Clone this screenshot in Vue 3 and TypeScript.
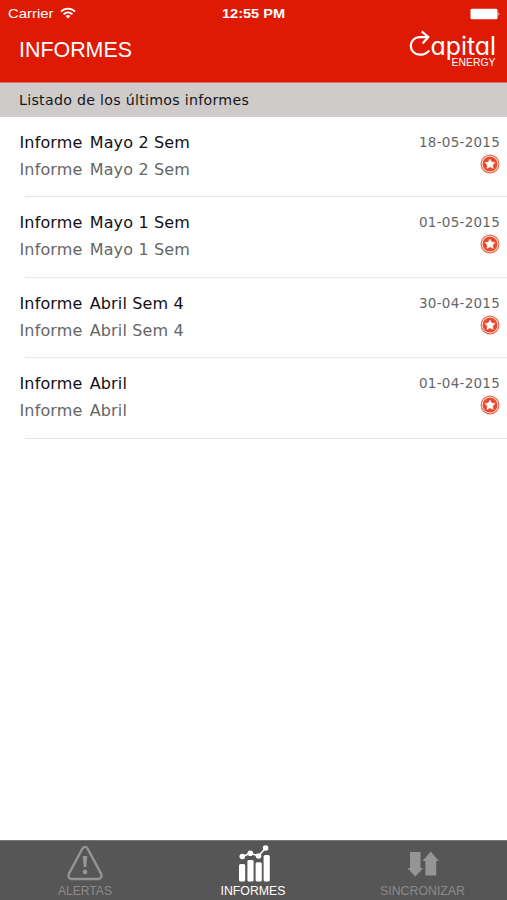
<script setup lang="ts">
interface Report {
  kind: string
  name: string
  date: string
}

const reports: Report[] = [
  { kind: 'Informe', name: 'Mayo 2 Sem', date: '18-05-2015' },
  { kind: 'Informe', name: 'Mayo 1 Sem', date: '01-05-2015' },
  { kind: 'Informe', name: 'Abril Sem 4', date: '30-04-2015' },
  { kind: 'Informe', name: 'Abril', date: '01-04-2015' },
]
</script>

<template>
  <div class="screen">
    <header class="header">
      <div class="status">
        <div class="carrier">
          <svg width="46" height="20" class="label">
            <text x="0" y="14" textLength="45.5" lengthAdjust="spacingAndGlyphs">Carrier</text>
          </svg>
          <svg width="16" height="12" viewBox="0 0 16 12" fill="none" stroke="#fff" stroke-width="1.8">
            <path d="M1 4.6C5 .6 11 .6 15 4.6M3.6 7.3C6.2 4.8 9.8 4.8 12.4 7.3" />
            <path d="M5.6 9.1Q8 7 10.400 9.100L8 11.600Z" fill="#fff" stroke="none" />
          </svg>
        </div>
        <svg width="66" height="20" class="label clock">
          <text x="0" y="14" textLength="63" lengthAdjust="spacingAndGlyphs">12:55 PM</text>
        </svg>
        <svg class="battery" width="31" height="12" viewBox="0 0 31 12" fill="#fff">
          <rect x=".5" y=".7" width="27" height="10.600" rx="1.500" />
          <path d="M28.500 4Q30.200 6 28.500 8Z" />
        </svg>
      </div>
      <div class="titlebar">
        <svg class="heading" width="122" height="34">
          <text x="0" y="23" textLength="113" lengthAdjust="spacingAndGlyphs">INFORMES</text>
        </svg>
        <svg class="logo" width="90" height="42" viewBox="0 0 90 42">
          <path
            d="M21.300 22.500Q17.500 26.600 13.300 26.600H11.500A8.700 8.700 0 0 1 11.500 9.100H19.500M13.700 3.300L20.300 9L14.600 15.500"
            fill="none"
            stroke="#fff"
            stroke-width="2.200"
          />
          <text class="brand" x="22.500" y="27" textLength="65.500" lengthAdjust="spacingAndGlyphs">apital</text>
          <text class="brand-sub" x="43.500" y="38.300" textLength="44" lengthAdjust="spacingAndGlyphs">ENERGY</text>
        </svg>
      </div>
    </header>

    <div class="section">Listado de los últimos informes</div>

    <ul class="list">
      <li v-for="report in reports" :key="report.date" class="row">
        <div class="names">
          <span class="title"><span class="kind">{{ report.kind }}</span> {{ report.name }}</span>
          <span class="detail"><span class="kind">{{ report.kind }}</span> {{ report.name }}</span>
        </div>
        <div class="meta">
          <span class="date">{{ report.date }}</span>
          <svg class="star" width="20" height="20" viewBox="0 0 20 20">
            <circle cx="10" cy="10" r="8.900" fill="none" stroke="#ed6a50" stroke-width="1.200" />
            <circle cx="10" cy="10" r="7.500" fill="#ea4a2b" />
            <path
              d="M10 5L11.600 8.100L15 8.600L12.600 11L13.100 14.400L10 12.800L6.900 14.400L7.400 11L5 8.600L8.400 8.100Z"
              fill="#fff"
              stroke="#fff"
              stroke-width=".5"
            />
          </svg>
        </div>
      </li>
    </ul>

    <nav class="tabs">
      <div class="tab">
        <svg width="40" height="38" viewBox="0 0 40 38">
          <path
            d="M17.400 4.700Q20 1.100 22.600 4.700L36 29.600Q37.800 34.400 33.500 35H6.500Q2.200 34.400 4 29.600Z"
            fill="none"
            stroke="#959595"
            stroke-width="2.300"
          />
          <path d="M17.700 12H22.300L21.300 23H18.700Z" fill="#959595" />
          <circle cx="20" cy="28" r="2.400" fill="#959595" />
        </svg>
        <svg class="caption" width="60" height="17">
          <text x="3" y="12" textLength="54" lengthAdjust="spacingAndGlyphs">ALERTAS</text>
        </svg>
      </div>
      <div class="tab active">
        <svg width="40" height="38" viewBox="0 0 40 38" fill="#fff">
          <rect x="5" y="20" width="6.200" height="17.500" rx="1.500" />
          <rect x="13.400" y="16" width="6.200" height="21.500" rx="1.500" />
          <rect x="21.600" y="18.300" width="6.200" height="19.200" rx="1.500" />
          <rect x="29.600" y="11" width="6.200" height="26.500" rx="1.500" />
          <path d="M8.300 12.500L16.300 9.300L24.500 12L31.600 4" fill="none" stroke="#fff" stroke-width="1.500" />
          <circle cx="8.300" cy="12.500" r="2.800" />
          <circle cx="16.300" cy="9.300" r="2.800" />
          <circle cx="24.500" cy="12" r="2.800" />
          <circle cx="31.600" cy="4" r="2.800" />
        </svg>
        <svg class="caption" width="71" height="17">
          <text x="2.500" y="12" textLength="65" lengthAdjust="spacingAndGlyphs">INFORMES</text>
        </svg>
      </div>
      <div class="tab">
        <svg width="40" height="38" viewBox="0 0 40 38" fill="#959595">
          <path d="M7 8H17.500V24H20.500L12.200 32.500L4.500 24H7Z" />
          <path d="M27.700 7.500L35.800 17H33.200V31.500H22.400V17H19.500Z" />
        </svg>
        <svg class="caption" width="91" height="17">
          <text x="3" y="12" textLength="85" lengthAdjust="spacingAndGlyphs">SINCRONIZAR</text>
        </svg>
      </div>
    </nav>
  </div>
</template>

<style>
body {
  margin: 0;
}
</style>

<style scoped>
.screen {
  display: flex;
  flex-direction: column;
  width: 507px;
  height: 900px;
  overflow: hidden;
  background: #fff;
  font-family: 'DejaVu Sans', sans-serif;
}

svg {
  display: block;
  flex: none;
}

.header {
  box-sizing: border-box;
  height: 83px;
  flex: none;
  background: #de1a05;
  border-bottom: 1px solid #dc7268;
}

.status {
  display: grid;
  grid-template-columns: 1fr auto 1fr;
  align-items: center;
  height: 28px;
  padding: 0 6px 0 8px;
}

.carrier {
  display: flex;
  align-items: center;
  gap: 6px;
}

.carrier svg:last-child {
  margin-top: -2px;
}

.label {
  font-family: 'Liberation Sans', sans-serif;
  font-size: 13.5px;
  fill: #fff;
}

.clock {
  font-weight: 700;
}

.battery {
  justify-self: end;
  margin-top: -1px;
}

.titlebar {
  display: flex;
  justify-content: space-between;
  padding: 0 9px 0 19px;
}

.heading {
  margin-top: 6px;
  font-family: 'Liberation Sans', sans-serif;
  font-size: 22.5px;
  fill: #fff;
}

.logo {
  fill: #fff;
}

.brand {
  font-family: Inter, 'Liberation Sans', sans-serif;
  font-size: 25.5px;
  font-weight: 400;
  font-feature-settings: 'cv11';
}

.brand-sub {
  font-family: 'Liberation Sans', sans-serif;
  font-size: 11px;
}

.section {
  height: 34px;
  flex: none;
  padding-left: 19px;
  background: #cfcbcb;
  color: #151515;
  font-size: 14.2px;
  letter-spacing: 0.28px;
  line-height: 34px;
}

.list {
  flex: 1;
  margin: 0;
  padding: 0;
  list-style: none;
}

.row {
  display: flex;
  justify-content: space-between;
  box-sizing: border-box;
  height: 80.4px;
  padding: 12px 7px 0 19.5px;
  background: linear-gradient(#e6e6e6, #e6e6e6) 25px 100% / 100% 1px no-repeat;
}

.names {
  display: flex;
  flex-direction: column;
  font-size: 16px;
  letter-spacing: 0.14px;
  line-height: 27px;
}

.kind {
  margin-right: 2px;
}

.title {
  color: #111;
}

.detail {
  color: #666;
}

.meta {
  display: flex;
  flex-direction: column;
  align-items: flex-end;
  color: #666;
  font-size: 13.5px;
  letter-spacing: 0.25px;
  line-height: 26px;
}

.star {
  margin-top: -1px;
}

.tabs {
  display: grid;
  grid-template-columns: repeat(3, 1fr);
  box-sizing: border-box;
  height: 60px;
  flex: none;
  background: #565656;
  border-top: 1px solid #777;
}

.tab {
  display: flex;
  flex-direction: column;
  align-items: center;
  padding-top: 3px;
}

.caption {
  margin-top: 1px;
  font-family: 'Liberation Sans', sans-serif;
  font-size: 12.5px;
  fill: #8b8b8b;
}

.active .caption {
  fill: #fff;
}
</style>
